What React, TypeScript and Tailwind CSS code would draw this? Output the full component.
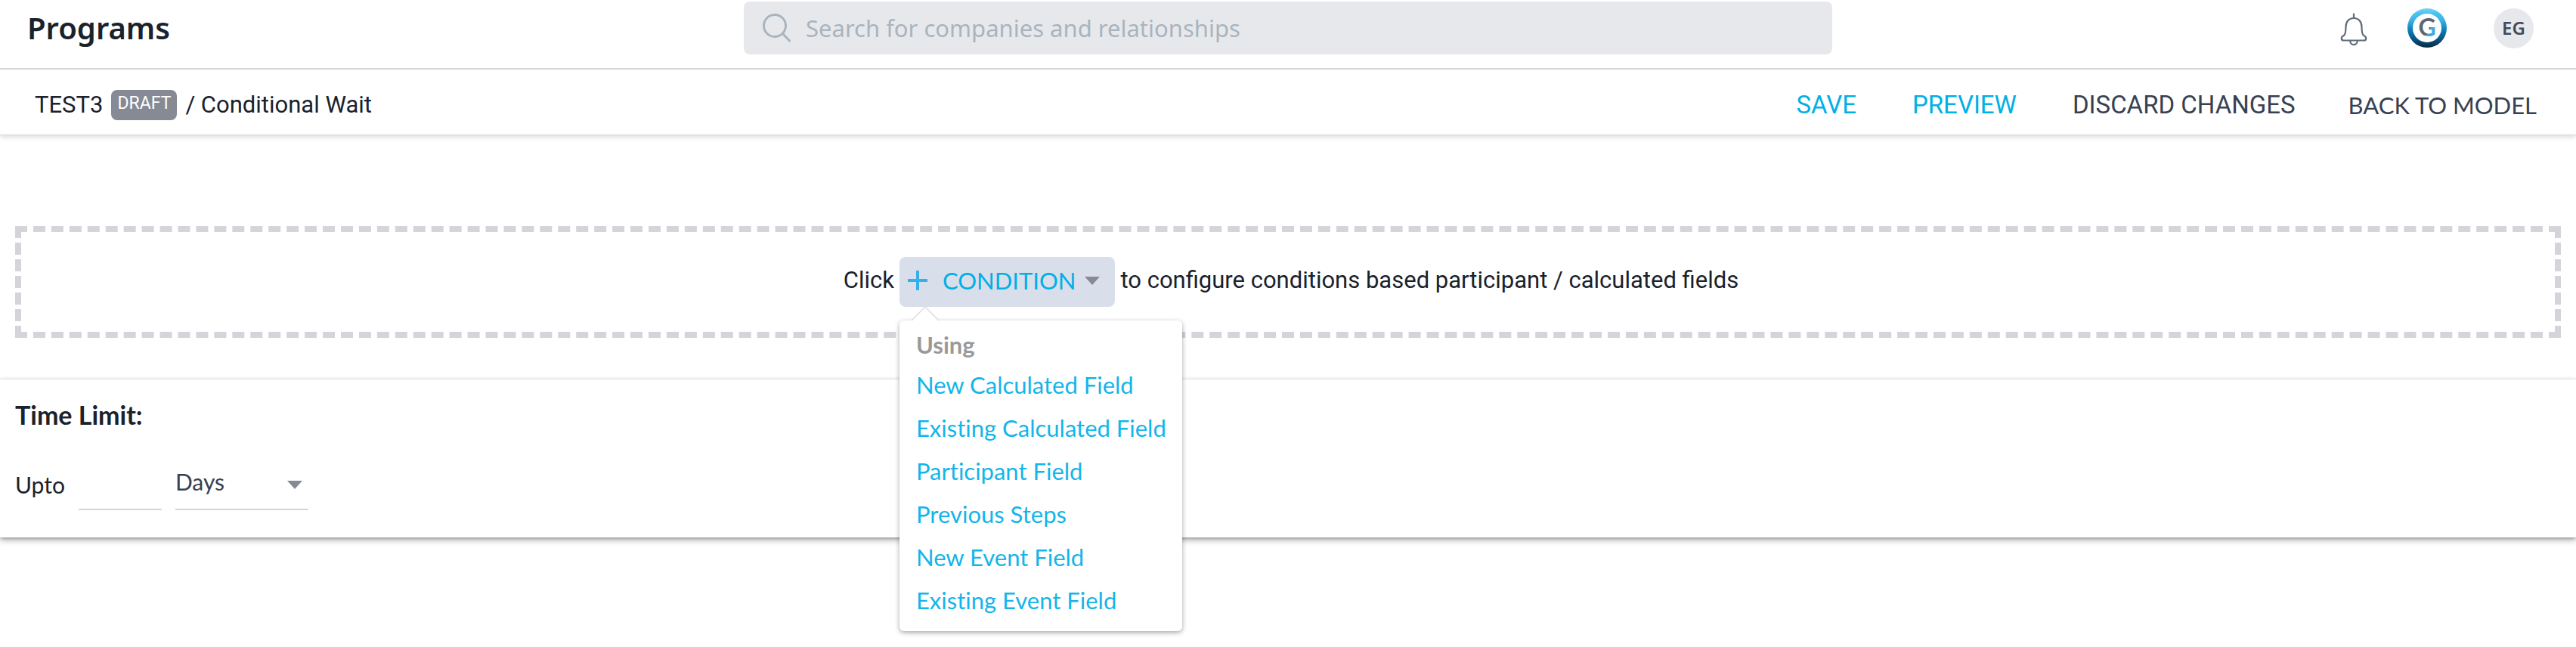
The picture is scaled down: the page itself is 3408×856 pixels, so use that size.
import React, { useState } from 'react';

const conditionOptions = [
  'New Calculated Field',
  'Existing Calculated Field',
  'Participant Field',
  'Previous Steps',
  'New Event Field',
  'Existing Event Field',
];

function SearchIcon() {
  return (
    <svg viewBox="0 0 38 38" className="w-[38px] h-[38px] shrink-0" fill="none" stroke="#a9b4be" strokeWidth="3" strokeLinecap="round">
      <circle cx="17" cy="16" r="14.5" />
      <path d="M27.5 26.5 36.5 36" />
    </svg>
  );
}

function BellIcon() {
  return (
    <svg viewBox="0 0 36 44" className="w-9 h-11" fill="none" stroke="#5f6b7a" strokeWidth="2.2" strokeLinecap="round" strokeLinejoin="round">
      <path d="M18 1.5V7" />
      <path d="M18 7C11.5 7 7.5 12 7.5 18.5C7.5 24 7 29 4.5 30.2C2.5 31 1.8 32.2 1.8 33.7C1.8 35.5 3 36.5 4.5 36.5H31.5C33 36.5 34.2 35.5 34.2 33.7C34.2 32.2 33.5 31 31.5 30.2C29 29 28.5 24 28.5 18.5C28.5 12 24.5 7 18 7Z" />
      <path d="M13.2 37C13.2 40 15.2 42.2 18 42.2C20.8 42.2 22.8 40 22.8 37" />
    </svg>
  );
}

function Logo() {
  return (
    <svg viewBox="0 0 54 54" className="w-[54px] h-[54px]">
      <defs>
        <linearGradient id="ring" x1="0" y1="0" x2="0" y2="1">
          <stop offset="0" stopColor="#7fd4f5" />
          <stop offset="0.12" stopColor="#4cc3f0" />
          <stop offset="0.3" stopColor="#3fb4e4" />
          <stop offset="0.55" stopColor="#0f7fb8" />
          <stop offset="0.8" stopColor="#075282" />
          <stop offset="1" stopColor="#06283f" />
        </linearGradient>
        <linearGradient id="letter" x1="0" y1="0" x2="1" y2="1">
          <stop offset="0.62" stopColor="#5b6670" />
          <stop offset="0.62" stopColor="#42a9e0" />
        </linearGradient>
      </defs>
      <circle cx="27" cy="27" r="26" fill="url(#ring)" />
      <circle cx="27" cy="27" r="19" fill="#fff" />
      <text x="27" y="38" textAnchor="middle" fontSize="32" fontWeight="700" fill="url(#letter)" className="font-['Lato',sans-serif]">
        G
      </text>
    </svg>
  );
}

function Caret() {
  return (
    <svg viewBox="0 0 20 11" className="w-5 h-[11px]" fill="#868a94">
      <path d="M0 0H20L10 11Z" />
    </svg>
  );
}

function Header() {
  return (
    <header className="grid grid-cols-[1fr_minmax(0,1440px)_1fr] items-start h-[92px] border-b-2 border-[#d5d8dc]">
      <h1 className="pl-9 pt-2 text-[40px] leading-[58px] font-semibold font-['Noto_Sans',sans-serif]">Programs</h1>
      <label className="mt-[2px] h-[70px] px-6 flex items-center gap-5 rounded-lg bg-[#e7e8ec]">
        <SearchIcon />
        <input
          type="search"
          aria-label="Search"
          placeholder="Search for companies and relationships"
          className="flex-1 min-w-0 bg-transparent outline-none text-[31px] placeholder:text-[#a9b4be] font-['Noto_Sans',sans-serif]"
        />
      </label>
      <div className="flex justify-end items-center pt-[10px] pr-14">
        <button type="button" aria-label="Notifications" className="mr-[52px] pt-1">
          <BellIcon />
        </button>
        <a href="#" aria-label="Home" className="mr-[61px]">
          <Logo />
        </a>
        <button type="button" className="w-[53px] h-[53px] rounded-full bg-[#e7e8ec] text-2xl font-semibold text-[#3f4b5a] font-['Noto_Sans',sans-serif]">
          EG
        </button>
      </div>
    </header>
  );
}

function Toolbar() {
  return (
    <div className="flex items-center justify-between h-[87px] pt-2 pl-[46px] pr-[52px] border-b border-[#d2d4d8] shadow-[0_3px_6px_rgba(0,0,0,0.12)]">
      <div className="flex items-center text-[31px] leading-10">
        <span>TEST3</span>
        <span className="mx-[11px] px-2 h-10 rounded-lg bg-[#868a94] text-[23px] leading-9 text-white">DRAFT</span>
        <span>/ Conditional Wait</span>
      </div>
      <div className="flex items-center text-[33px] leading-10 text-[#374151]">
        <button type="button" className="mr-[74px] text-[#00b0e6]">SAVE</button>
        <button type="button" className="mr-[74px] text-[#00b0e6]">PREVIEW</button>
        <button type="button" className="mr-[70px]">DISCARD CHANGES</button>
        <a href="#" className="text-[31px] font-['Lato',sans-serif]">BACK TO MODEL</a>
      </div>
    </div>
  );
}

function ConditionMenu() {
  return (
    <div className="absolute left-0 top-[84px] z-10 w-[374px] pt-[7px] pb-3 rounded-md bg-white text-left text-[31px] shadow-[0_2px_6px_rgba(0,0,0,0.35)] font-['Lato',sans-serif] [font-variant-ligatures:none]">
      <svg viewBox="0 0 38 20" className="absolute left-[15px] -top-[19px] w-[38px] h-5">
        <path d="M1 20 19 1 37 20Z" fill="#fff" />
        <path d="M1 19 19 1 37 19" fill="none" stroke="#dedede" strokeWidth="1.5" />
      </svg>
      <p className="px-[22px] h-[50px] leading-[50px] font-bold text-[#999]">Using</p>
      <ul>
        {conditionOptions.map((option) => (
          <li key={option}>
            <button type="button" className="block w-full px-[22px] h-[57px] leading-[57px] text-left whitespace-nowrap text-[#13b5ea]">
              {option}
            </button>
          </li>
        ))}
      </ul>
    </div>
  );
}

export default function App() {
  const [open, setOpen] = useState(true);
  const [limit, setLimit] = useState('');

  return (
    <div className="min-h-screen bg-white text-[#1a222c] font-['Roboto',sans-serif]">
      <Header />
      <Toolbar />

      <main>
        <section className="px-5 pt-[120px] pb-[54px]">
          <div className="flex justify-center items-start h-[148px] pt-[33px] pl-2 border-8 border-dashed border-[#d4d5da] text-[31px] leading-[62px]">
            <span>Click</span>
            <div className="relative mx-[7px]">
              <button
                type="button"
                aria-expanded={open}
                onClick={() => setOpen(!open)}
                className="flex items-center h-[66px] pl-[11px] pr-5 pb-1 rounded-lg bg-[#d9dfea] text-[#00b0e6] font-['Lato',sans-serif]"
              >
                <svg viewBox="0 0 26 26" className="w-[26px] h-[26px] mr-5" stroke="#35b0e8" strokeWidth="4">
                  <path d="M13 0V26M0 13H26" />
                </svg>
                <span className="mr-3">CONDITION</span>
                <Caret />
              </button>
              {open && <ConditionMenu />}
            </div>
            <span>to configure conditions based participant / calculated fields</span>
          </div>
        </section>

        <section className="px-5 pt-[26px] pb-9 border-t border-[#e2e2e4] shadow-[0_2px_4px_rgba(0,0,0,0.2),0_4px_8px_rgba(0,0,0,0.25)] font-['Lato',sans-serif]">
          <h2 className="text-[34px] leading-[42px] font-bold">Time Limit:</h2>
          <div className="flex items-end mt-[43px] text-[30px]">
            <label htmlFor="limit" className="h-[62px] leading-[38px] pt-[9px] mr-[18px]">Upto</label>
            <input
              id="limit"
              type="text"
              value={limit}
              onChange={(e) => setLimit(e.target.value)}
              className="w-[110px] h-[62px] mr-[18px] border-b-2 border-[#d4d5d8] outline-none"
            />
            <div className="relative">
              <select aria-label="Time unit" className="block appearance-none w-[176px] h-[62px] pb-3 border-b-2 border-[#d4d5d8] bg-transparent outline-none text-[#374151]">
                <option>Days</option>
                <option>Weeks</option>
                <option>Months</option>
              </select>
              <span className="absolute right-2 top-[23px] pointer-events-none">
                <Caret />
              </span>
            </div>
          </div>
        </section>
      </main>
    </div>
  );
}
